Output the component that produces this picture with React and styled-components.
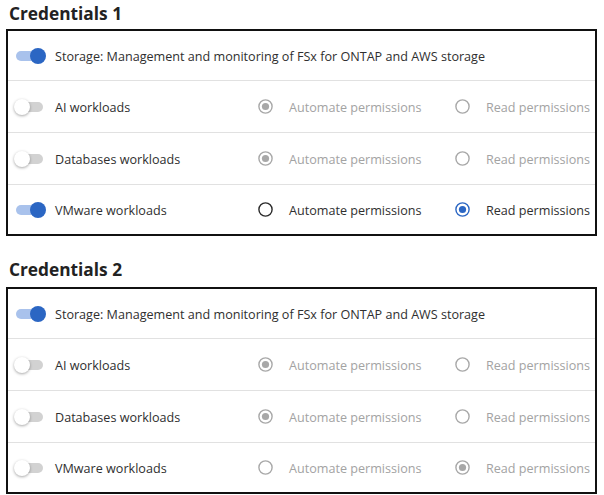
import React from 'react';
import styled, { createGlobalStyle } from 'styled-components';

const GlobalStyle = createGlobalStyle`
  body {
    margin: 0;
    background: #fff;
    font-family: 'Open Sans', 'Noto Sans', sans-serif;
  }
`;

const Page = styled.div`
  padding: 3px 7px 0 6px;
  width: 591px;
`;

const Title = styled.h2`
  margin: ${(p) => p.$top}px 0 ${(p) => p.$bottom}px 3px;
  font-size: 17.3px;
  line-height: 22px;
  font-weight: 700;
  color: #222;
`;

const Box = styled.div`
  border: 2px solid #111;
  display: flex;
  flex-direction: column;
`;

const Row = styled.div`
  display: grid;
  grid-template-columns: 244px 197px 1fr;
  align-items: center;
  height: ${(p) => (p.$first ? 49 : 51)}px;
  padding-left: 6px;
  border-top: ${(p) => (p.$first ? 'none' : '1px solid #e1e1e1')};

  &:last-child {
    height: 49px;
  }
`;

const Lead = styled.div`
  display: flex;
  align-items: center;
  gap: 9px;
  grid-column: ${(p) => (p.$wide ? '1 / -1' : 'auto')};
`;

const Toggle = styled.span`
  position: relative;
  width: 32px;
  height: 16px;
  flex: none;
`;

const Track = styled.span`
  position: absolute;
  left: 2px;
  right: 3px;
  top: 3px;
  height: 10px;
  border-radius: 5px;
  background: ${(p) => (p.$on ? '#a9c2ec' : '#d2d2d2')};
`;

const Thumb = styled.span`
  position: absolute;
  top: 0;
  left: ${(p) => (p.$on ? '16px' : '0')};
  width: 16px;
  height: 16px;
  border-radius: 50%;
  background: ${(p) => (p.$on ? '#2b66c3' : '#fff')};
  box-shadow: ${(p) => (p.$on ? 'none' : '0 1px 3px rgba(0,0,0,0.35)')};
`;

const Label = styled.span`
  font-size: 12.6px;
  padding-top: 1px;
  color: ${(p) => (p.$muted ? '#a3a3a3' : '#2f2f2f')};
  white-space: nowrap;
`;

const Choice = styled.div`
  display: flex;
  align-items: center;
  gap: 16px;
`;

const Switch = ({ on }) => (
  <Toggle>
    <Track $on={on} />
    <Thumb $on={on} />
  </Toggle>
);

const Radio = ({ checked, disabled }) => {
  const ring = disabled ? '#a8a8a8' : checked ? '#2b66c3' : '#2a2a2a';
  const dot = disabled ? '#a8a8a8' : '#2b66c3';
  return (
    <svg width="15" height="15" viewBox="0 0 15 15">
      <circle cx="7.5" cy="7.5" r="6.6" fill="none" stroke={ring} strokeWidth="1.4" />
      {checked && <circle cx="7.5" cy="7.5" r="3.6" fill={dot} />}
    </svg>
  );
};

const workloads = ['AI workloads', 'Databases workloads', 'VMware workloads'];

const sets = [
  {
    title: 'Credentials 1',
    top: 0,
    bottom: 4,
    rows: [
      { on: false, pick: 'auto' },
      { on: false, pick: 'auto' },
      { on: true, pick: 'read' },
    ],
  },
  {
    title: 'Credentials 2',
    top: 23,
    bottom: 6,
    rows: [
      { on: false, pick: 'auto' },
      { on: false, pick: 'auto' },
      { on: false, pick: 'read' },
    ],
  },
];

const App = () => {
  return (
    <Page>
      <GlobalStyle />
      {sets.map((set) => (
        <div key={set.title}>
          <Title $top={set.top} $bottom={set.bottom}>
            {set.title}
          </Title>
          <Box>
            <Row $first>
              <Lead $wide>
                <Switch on />
                <Label>Storage: Management and monitoring of FSx for ONTAP and AWS storage</Label>
              </Lead>
            </Row>
            {set.rows.map((r, i) => (
              <Row key={workloads[i]}>
                <Lead>
                  <Switch on={r.on} />
                  <Label>{workloads[i]}</Label>
                </Lead>
                <Choice>
                  <Radio checked={r.pick === 'auto'} disabled={!r.on} />
                  <Label $muted={!r.on}>Automate permissions</Label>
                </Choice>
                <Choice>
                  <Radio checked={r.pick === 'read'} disabled={!r.on} />
                  <Label $muted={!r.on}>Read permissions</Label>
                </Choice>
              </Row>
            ))}
          </Box>
        </div>
      ))}
    </Page>
  );
};

export default App;
